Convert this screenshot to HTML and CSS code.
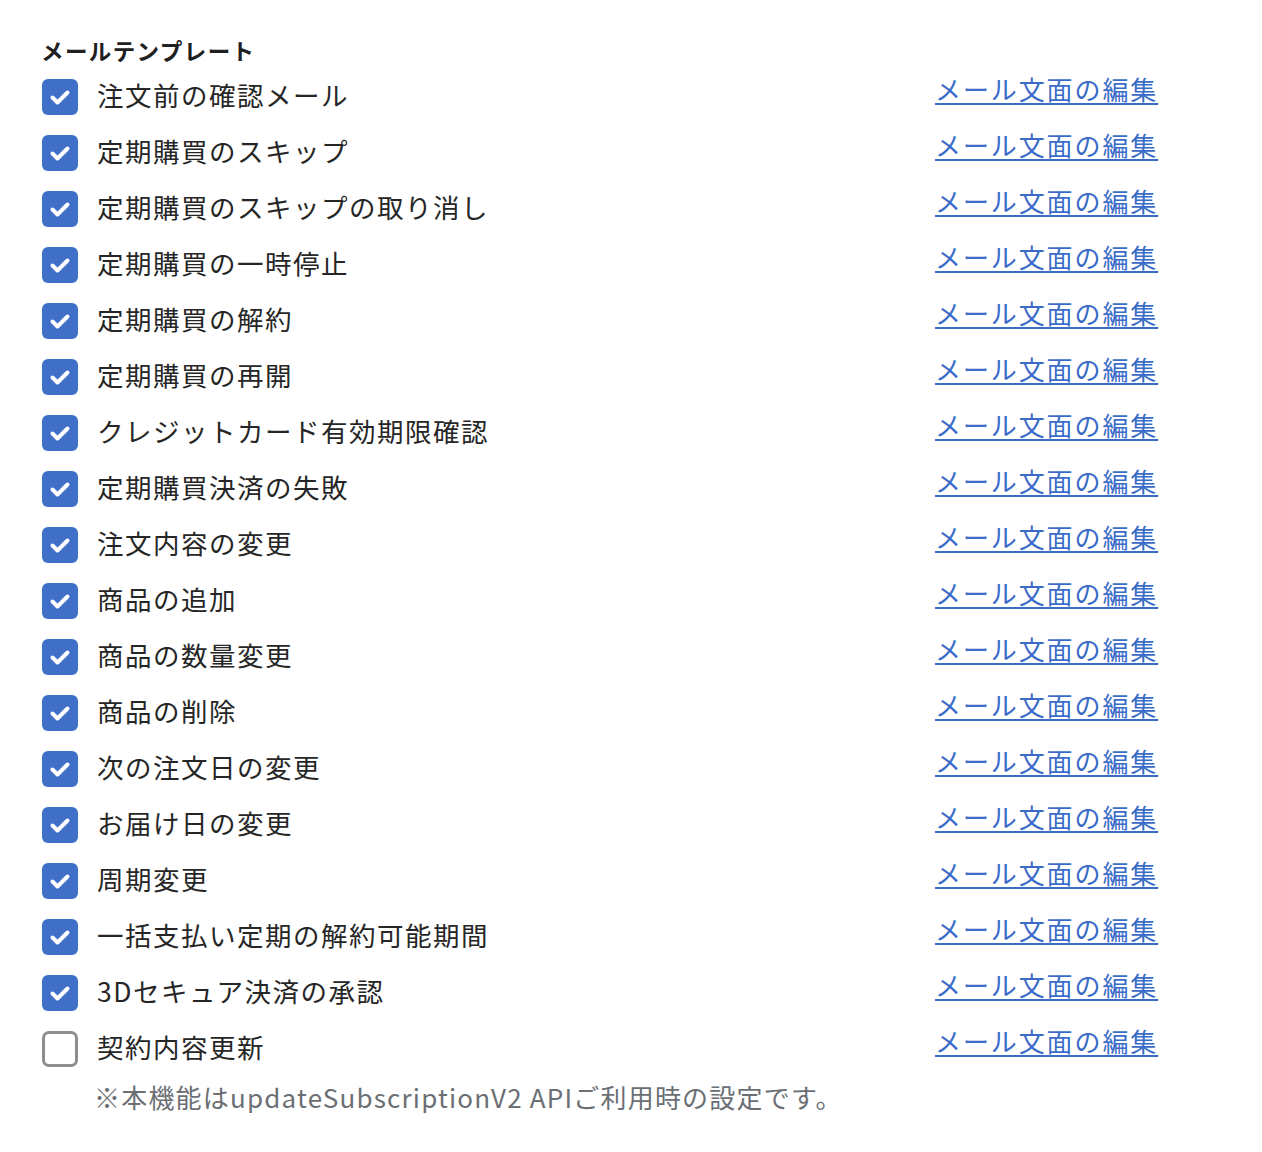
FILE: index.html
```
<!DOCTYPE html>
<html lang="ja">
<head>
<meta charset="utf-8">
<title>メールテンプレート</title>
<link rel="stylesheet" href="styles.css">
</head>
<body>
<div class="panel">
  <h2 class="title">メールテンプレート</h2>
  <ul class="list">
    <li class="row"><span class="cb on"><svg viewBox="0 0 36 36"><path d="M10.5 18.5 L15.5 23.5 L25.5 13.5"/></svg></span><span class="label">注文前の確認メール</span><a class="link" href="#">メール文面の編集</a></li>
    <li class="row"><span class="cb on"><svg viewBox="0 0 36 36"><path d="M10.5 18.5 L15.5 23.5 L25.5 13.5"/></svg></span><span class="label">定期購買のスキップ</span><a class="link" href="#">メール文面の編集</a></li>
    <li class="row"><span class="cb on"><svg viewBox="0 0 36 36"><path d="M10.5 18.5 L15.5 23.5 L25.5 13.5"/></svg></span><span class="label">定期購買のスキップの取り消し</span><a class="link" href="#">メール文面の編集</a></li>
    <li class="row"><span class="cb on"><svg viewBox="0 0 36 36"><path d="M10.5 18.5 L15.5 23.5 L25.5 13.5"/></svg></span><span class="label">定期購買の一時停止</span><a class="link" href="#">メール文面の編集</a></li>
    <li class="row"><span class="cb on"><svg viewBox="0 0 36 36"><path d="M10.5 18.5 L15.5 23.5 L25.5 13.5"/></svg></span><span class="label">定期購買の解約</span><a class="link" href="#">メール文面の編集</a></li>
    <li class="row"><span class="cb on"><svg viewBox="0 0 36 36"><path d="M10.5 18.5 L15.5 23.5 L25.5 13.5"/></svg></span><span class="label">定期購買の再開</span><a class="link" href="#">メール文面の編集</a></li>
    <li class="row"><span class="cb on"><svg viewBox="0 0 36 36"><path d="M10.5 18.5 L15.5 23.5 L25.5 13.5"/></svg></span><span class="label">クレジットカード有効期限確認</span><a class="link" href="#">メール文面の編集</a></li>
    <li class="row"><span class="cb on"><svg viewBox="0 0 36 36"><path d="M10.5 18.5 L15.5 23.5 L25.5 13.5"/></svg></span><span class="label">定期購買決済の失敗</span><a class="link" href="#">メール文面の編集</a></li>
    <li class="row"><span class="cb on"><svg viewBox="0 0 36 36"><path d="M10.5 18.5 L15.5 23.5 L25.5 13.5"/></svg></span><span class="label">注文内容の変更</span><a class="link" href="#">メール文面の編集</a></li>
    <li class="row"><span class="cb on"><svg viewBox="0 0 36 36"><path d="M10.5 18.5 L15.5 23.5 L25.5 13.5"/></svg></span><span class="label">商品の追加</span><a class="link" href="#">メール文面の編集</a></li>
    <li class="row"><span class="cb on"><svg viewBox="0 0 36 36"><path d="M10.5 18.5 L15.5 23.5 L25.5 13.5"/></svg></span><span class="label">商品の数量変更</span><a class="link" href="#">メール文面の編集</a></li>
    <li class="row"><span class="cb on"><svg viewBox="0 0 36 36"><path d="M10.5 18.5 L15.5 23.5 L25.5 13.5"/></svg></span><span class="label">商品の削除</span><a class="link" href="#">メール文面の編集</a></li>
    <li class="row"><span class="cb on"><svg viewBox="0 0 36 36"><path d="M10.5 18.5 L15.5 23.5 L25.5 13.5"/></svg></span><span class="label">次の注文日の変更</span><a class="link" href="#">メール文面の編集</a></li>
    <li class="row"><span class="cb on"><svg viewBox="0 0 36 36"><path d="M10.5 18.5 L15.5 23.5 L25.5 13.5"/></svg></span><span class="label">お届け日の変更</span><a class="link" href="#">メール文面の編集</a></li>
    <li class="row"><span class="cb on"><svg viewBox="0 0 36 36"><path d="M10.5 18.5 L15.5 23.5 L25.5 13.5"/></svg></span><span class="label">周期変更</span><a class="link" href="#">メール文面の編集</a></li>
    <li class="row"><span class="cb on"><svg viewBox="0 0 36 36"><path d="M10.5 18.5 L15.5 23.5 L25.5 13.5"/></svg></span><span class="label">一括支払い定期の解約可能期間</span><a class="link" href="#">メール文面の編集</a></li>
    <li class="row"><span class="cb on"><svg viewBox="0 0 36 36"><path d="M10.5 18.5 L15.5 23.5 L25.5 13.5"/></svg></span><span class="label">3Dセキュア決済の承認</span><a class="link" href="#">メール文面の編集</a></li>
    <li class="row"><span class="cb off"></span><span class="label">契約内容更新</span><a class="link" href="#">メール文面の編集</a></li>
  </ul>
  <p class="note">※本機能はupdateSubscriptionV2 APIご利用時の設定です。</p>
</div>
</body>
</html>
```
FILE: styles.css
```
html, body {
  margin: 0;
  padding: 0;
  background: #ffffff;
}
body {
  font-family: "Noto Sans CJK JP", "Noto Sans", sans-serif;
  color: #222222;
}
.panel {
  padding: 35px 0 0 42px;
}
.title {
  margin: 0 0 0 -1px;
  font-size: 22.5px;
  line-height: 30px;
  font-weight: 700;
  letter-spacing: 1.4px;
  color: #202020;
}
.list {
  list-style: none;
  margin: 4px 0 0 0;
  padding: 0;
}
.row {
  display: grid;
  grid-template-columns: 36px 819px auto;
  column-gap: 19px;
  align-items: center;
  height: 56px;
}
.cb {
  width: 36px;
  height: 36px;
  box-sizing: border-box;
  border-radius: 6px;
  display: block;
}
.cb.on {
  background: #3f6fc7;
}
.cb.on svg {
  width: 36px;
  height: 36px;
  display: block;
}
.cb.on path {
  fill: none;
  stroke: #ffffff;
  stroke-width: 4;
  stroke-linecap: round;
  stroke-linejoin: round;
}
.cb.off {
  border: 3px solid #8d8e90;
  border-radius: 7px;
  background: #ffffff;
}
.label {
  margin-bottom: 4px;
  font-size: 26.5px;
  line-height: 32px;
  letter-spacing: 1.5px;
  color: #262626;
  white-space: nowrap;
}
.link {
  align-self: start;
  margin-top: 5px;
  font-size: 26px;
  line-height: 30px;
  letter-spacing: 1.9px;
  color: #3a6cc8;
  text-decoration: underline;
  text-decoration-thickness: 2px;
  text-underline-offset: 3px;
  white-space: nowrap;
}
.note {
  margin: 4px 0 0 52px;
  font-size: 26px;
  line-height: 32px;
  letter-spacing: 1.2px;
  color: #6b6f74;
}
```
